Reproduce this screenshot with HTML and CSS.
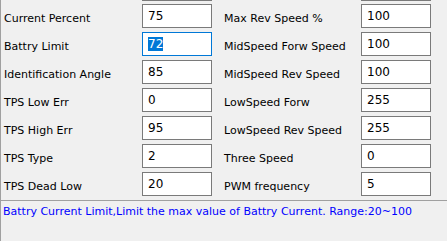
FILE: index.html
```html
<!DOCTYPE html>
<html lang="en">
<head>
  <meta charset="UTF-8" />
  <title>Controller Parameters</title>
  <link rel="stylesheet" href="styles.css">
</head>
<body>

<div class="panel">
  <div class="rows">
    <div class="row cut">
      <span class="label"></span><div class="field"></div>
      <span class="label"></span><div class="field"></div>
    </div>
    <div class="row">
      <span class="label">Current Percent</span><div class="field">75</div>
      <span class="label">Max Rev Speed %</span><div class="field">100</div>
    </div>
    <div class="row">
      <span class="label">Battry Limit</span><div class="field focused"><span class="sel">72</span></div>
      <span class="label">MidSpeed Forw Speed</span><div class="field">100</div>
    </div>
    <div class="row">
      <span class="label">Identification Angle</span><div class="field">85</div>
      <span class="label">MidSpeed Rev Speed</span><div class="field">100</div>
    </div>
    <div class="row">
      <span class="label">TPS Low Err</span><div class="field">0</div>
      <span class="label">LowSpeed Forw</span><div class="field">255</div>
    </div>
    <div class="row">
      <span class="label">TPS High Err</span><div class="field">95</div>
      <span class="label">LowSpeed Rev Speed</span><div class="field">255</div>
    </div>
    <div class="row">
      <span class="label">TPS Type</span><div class="field">2</div>
      <span class="label">Three Speed</span><div class="field">0</div>
    </div>
    <div class="row">
      <span class="label">TPS Dead Low</span><div class="field">20</div>
      <span class="label">PWM frequency</span><div class="field">5</div>
    </div>
  </div>
</div>

<div class="status">Battry Current Limit,Limit the max value of Battry Current. Range:20~100</div>

</body>
</html>
```

FILE: styles.css
```css
body {
  margin: 0;
  background-color: #f0f0f0;
  font-family: "DejaVu Sans", Tahoma, sans-serif;
  font-size: 11px;
  color: #000;
  height: 241px;
  border-left: 1px solid #a0a0a0;
  box-sizing: border-box;
  overflow: hidden;
}

.panel {
  height: 200px;
  overflow: hidden;
  border-bottom: 1px solid #a0a0a0;
}

.rows {
  display: flex;
  flex-direction: column;
  gap: 4px;
  margin-top: -20px;
}

.row {
  display: grid;
  grid-template-columns: 138px 82px 137px 70px;
  align-items: center;
  padding-left: 3px;
  height: 24px;
}

.row.cut {
  height: 21px;
  margin-bottom: -1px;
}

.row.cut .field {
  height: 21px;
}

.label {
  padding-top: 4px;
  white-space: nowrap;
}

.field {
  width: 70px;
  height: 24px;
  box-sizing: border-box;
  border: 1px solid #7a7a7a;
  background-color: #fff;
  padding: 4px 0 0 5px;
  font-size: 12px;
  line-height: 14px;
}

.field.focused {
  border-color: #0078d7;
}

.sel {
  background-color: #0078d7;
  color: #fff;
}

.status {
  padding: 4px 0 0 2px;
  color: #0000ff;
  font-size: 11px;
  white-space: nowrap;
}
```
